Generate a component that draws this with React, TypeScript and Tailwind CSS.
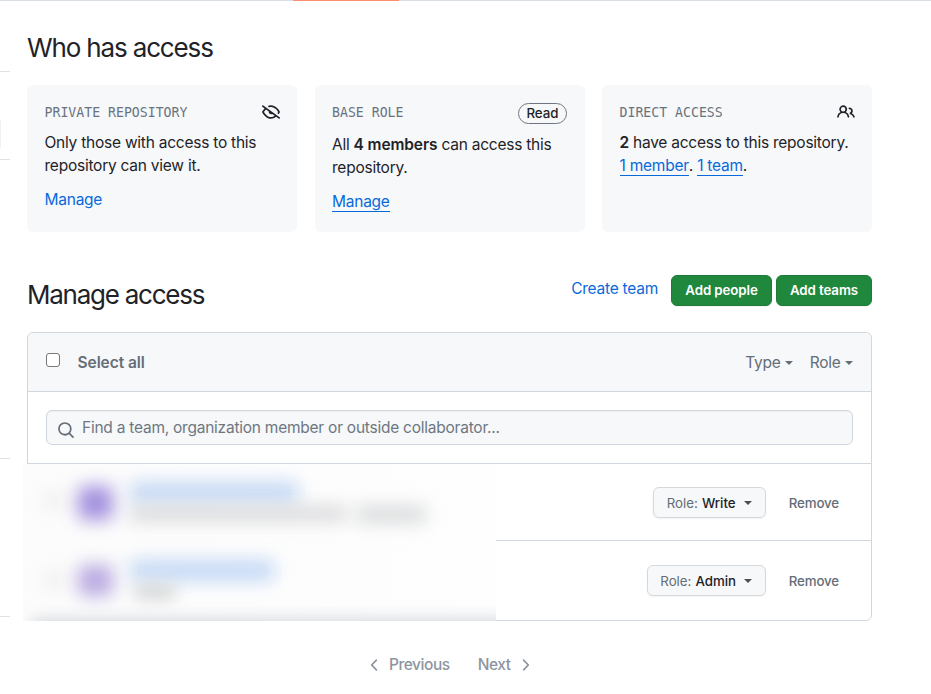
import React from 'react';

const paths = {
  eyeClosed:
    'M.143 2.31a.75.75 0 0 1 1.047-.167l14.5 10.5a.75.75 0 1 1-.88 1.214l-2.248-1.628C11.346 13.19 9.792 14 8 14c-1.981 0-3.67-.992-4.933-2.078C1.797 10.832.88 9.577.43 8.9a1.619 1.619 0 0 1 0-1.797c.353-.533.995-1.42 1.868-2.305L.31 3.357A.75.75 0 0 1 .143 2.31Zm1.536 5.622A.12.12 0 0 0 1.657 8c0 .021.006.045.022.068.412.621 1.242 1.75 2.366 2.717C5.175 11.758 6.527 12.5 8 12.5c1.195 0 2.31-.488 3.29-1.191L9.063 9.695A2 2 0 0 1 6.058 7.52L3.529 5.688a14.207 14.207 0 0 0-1.85 2.244ZM8 3.5c-.516 0-1.017.09-1.499.251a.75.75 0 1 1-.473-1.423A6.207 6.207 0 0 1 8 2c1.981 0 3.67.992 4.933 2.078 1.27 1.091 2.187 2.345 2.637 3.023a1.62 1.62 0 0 1 0 1.798c-.11.166-.248.365-.41.587a.75.75 0 1 1-1.21-.887c.148-.201.272-.382.371-.53a.119.119 0 0 0 0-.137c-.412-.621-1.242-1.75-2.366-2.717C10.825 4.242 9.473 3.5 8 3.5Z',
  people:
    'M2 5.5a3.5 3.5 0 1 1 5.898 2.549 5.508 5.508 0 0 1 3.034 4.084.75.75 0 1 1-1.482.235 4 4 0 0 0-7.9 0 .75.75 0 0 1-1.482-.236A5.507 5.507 0 0 1 3.102 8.05 3.493 3.493 0 0 1 2 5.5ZM11 4a3.001 3.001 0 0 1 2.22 5.018 5.01 5.01 0 0 1 2.56 3.012.749.749 0 0 1-.885.954.752.752 0 0 1-.549-.514 3.507 3.507 0 0 0-2.522-2.372.75.75 0 0 1-.574-.73v-.352a.75.75 0 0 1 .416-.672A1.5 1.5 0 0 0 11 5.5.75.75 0 0 1 11 4Zm-5.5-.5a2 2 0 1 0-.001 3.999A2 2 0 0 0 5.5 3.5Z',
  search:
    'M10.68 11.74a6 6 0 0 1-7.922-8.982 6 6 0 0 1 8.982 7.922l3.04 3.04a.749.749 0 0 1-.326 1.275.749.749 0 0 1-.734-.215ZM11.5 7a4.499 4.499 0 1 0-8.997 0A4.499 4.499 0 0 0 11.5 7Z',
  chevronLeft:
    'M9.78 12.78a.75.75 0 0 1-1.06 0L4.47 8.53a.75.75 0 0 1 0-1.06l4.25-4.25a.751.751 0 0 1 1.042.018.751.751 0 0 1 .018 1.042L6.06 8l3.72 3.72a.75.75 0 0 1 0 1.06Z',
  chevronRight:
    'M6.22 3.22a.75.75 0 0 1 1.06 0l4.25 4.25a.75.75 0 0 1 0 1.06l-4.25 4.25a.751.751 0 0 1-1.042-.018.751.751 0 0 1-.018-1.042L9.94 8 6.22 4.28a.75.75 0 0 1 0-1.06Z',
};

const Icon: React.FC<{ name: keyof typeof paths; className?: string }> = ({ name, className }) => (
  <svg viewBox="0 0 16 16" fill="currentColor" className={`h-[18px] w-[18px] shrink-0 ${className ?? ''}`}>
    <path d={paths[name]} />
  </svg>
);

const Caret: React.FC<{ className?: string }> = ({ className }) => (
  <span className={`inline-block border-x-[4.5px] border-t-[4.5px] border-x-transparent border-t-current ${className ?? ''}`} />
);

interface CardProps {
  label: string;
  extra: React.ReactNode;
  children: React.ReactNode;
}

const Card: React.FC<CardProps> = ({ label, extra, children }) => (
  <div className="h-[147px] w-[270px] rounded-md bg-[#f6f8fa] px-[17.5px] pt-[18px]">
    <div className="flex items-start justify-between">
      <span className="font-['DejaVu_Sans_Mono',monospace] text-[13.2px] leading-[19px] tracking-normal text-[#6a737d]">
        {label}
      </span>
      {extra}
    </div>
    {children}
  </div>
);

const members = [
  { role: 'Write', row: 'h-[77px] border-b border-[#d0d7de]', button: 'w-[113px]', pad: 'pt-[2px]' },
  { role: 'Admin', row: 'h-[79px]', button: 'w-[119px]', pad: 'pt-px' },
];

const App: React.FC = () => (
  <div className="h-[694px] w-[931px] overflow-hidden bg-white font-['Inter',sans-serif] text-[15.5px] leading-[23px] tracking-[-0.24px] text-[#1f2328]">
    {/* Tab underline */}
    <div className="flex h-px bg-[#d8dee4]">
      <div className="ml-[293px] w-[106px] bg-[#fd8c73]" />
    </div>

    <div className="flex">
      {/* Edge of the settings navigation */}
      <div className="flex w-[27px] flex-col">
        <div className="mt-[70px] h-px w-[10px] bg-[#dfe3e8]" />
        <div className="mt-[48px] h-[28px] w-px bg-[#eff1f3]" />
        <div className="mt-[11px] h-px w-[10px] bg-[#dfe3e8]" />
        <div className="mt-[298px] h-px w-[10px] bg-[#dfe3e8]" />
        <div className="mt-[157px] h-px w-[10px] bg-[#dfe3e8]" />
      </div>

      <main className="w-[845px]">
        <h1 className="mt-[29px] text-[26px] leading-[36px] tracking-[-1.15px]">Who has access</h1>

        <div className="mt-[19px] flex justify-between">
          <Card label="PRIVATE REPOSITORY" extra={<Icon name="eyeClosed" />}>
            <p className="mt-[9px] whitespace-nowrap">
              Only those with access to this
              <br />
              repository can view it.
            </p>
            <a className="mt-[11px] block text-[#0969da]">Manage</a>
          </Card>
          <Card
            label="BASE ROLE"
            extra={
              <span className="flex h-[21px] w-[49px] items-center justify-center rounded-full border border-[#6e7781] text-[13.3px] font-medium tracking-normal">
                Read
              </span>
            }
          >
            <p className="mt-[9px] whitespace-nowrap">
              All <b className="font-semibold tracking-[-0.12px]">4 members</b> can access this
              <br />
              repository.
            </p>
            <div className="mt-[13px] leading-[19px]">
              <a className="inline-block border-b border-[#0969da] text-[#0969da]">Manage</a>
            </div>
          </Card>
          <Card label="DIRECT ACCESS" extra={<Icon name="people" />}>
            <p className="mt-[9px] whitespace-nowrap">
              <b className="font-semibold">2</b> have access to this repository.
            </p>
            <p className="mt-[2px] flex whitespace-pre leading-[19px]">
              <a className="border-b border-[#0969da] text-[#0969da]">1 member</a>
              <span>. </span>
              <a className="border-b border-[#0969da] text-[#0969da]">1 team</a>
              <span>.</span>
            </p>
          </Card>
        </div>

        <div className="mt-[43px] flex h-[40px] items-start">
          <h2 className="mt-[2px] text-[26px] leading-[36px] tracking-[-1.25px]">Manage access</h2>
          <a className="mr-[13px] ml-auto mt-[2px] text-[#0969da]">Create team</a>
          <button className="mr-1 h-[31px] w-[101px] rounded-md border border-[#1f7a37] bg-[#1f883d] text-[13.3px] font-semibold tracking-[-0.1px] text-white shadow-xs">
            Add people
          </button>
          <button className="h-[31px] w-[96px] rounded-md border border-[#1f7a37] bg-[#1f883d] text-[13.3px] font-semibold tracking-[-0.1px] text-white shadow-xs">
            Add teams
          </button>
        </div>

        <section className="relative mt-[17px] h-[289px] rounded-md border border-[#d0d7de]">
          <div className="flex h-[59px] items-center rounded-t-md border-b border-[#d0d7de] bg-[#f6f8fa] pt-px pr-[18.5px] pl-[17.5px] text-[#656d76]">
            <span className="mb-[6px] h-[14px] w-[14px] rounded-[3px] border border-[#767676] bg-white" />
            <span className="ml-[18px] font-semibold tracking-[-0.06px]">Select all</span>
            <span className="ml-auto flex items-center">
              Type
              <Caret className="ml-1" />
            </span>
            <span className="ml-[17px] flex items-center">
              Role
              <Caret className="ml-1" />
            </span>
          </div>

          <div className="h-[72px] border-b border-[#d0d7de] px-[18px] pt-[18px]">
            <div className="flex h-[35px] items-center rounded-md border border-[#d0d7de] bg-[#f6f8fa] pl-[10px] text-[#6e7781] shadow-[inset_0_1px_0_rgba(208,215,222,0.2)]">
              <Icon name="search" className="mt-[5px] text-[#656d76]" />
              <span className="ml-[7px]">Find a team, organization member or outside collaborator...</span>
            </div>
          </div>

          {members.map(({ role, row, button, pad }) => (
            <div key={role} className={`flex items-center justify-end pr-8 text-[13.3px] tracking-[-0.12px] ${row}`}>
              <button
                className={`flex h-[31px] items-center justify-center rounded-md border border-[#d5d8da] bg-[#f6f8fa] font-medium tracking-normal shadow-xs ${button} ${pad}`}
              >
                <span className="mr-1 font-normal text-[#656d76]">Role:</span>
                {role}
                <Caret className="ml-2 text-[#4a4f55]" />
              </button>
              <span className={`ml-[23px] font-medium text-[#656d76] ${pad}`}>Remove</span>
            </div>
          ))}

          {/* Redacted member details */}
          <div className="absolute top-[131px] -left-[5px] h-[157px] w-[473px] overflow-hidden bg-linear-to-r from-[#fcfcfc] to-[#fefefe]">
            <div className="absolute top-[30px] left-[21px] h-[14px] w-[20px] bg-[#ececec] blur-[9px]" />
            <div className="absolute top-[22px] left-[55px] h-[34px] w-[35px] rounded-md bg-[#a390de] blur-[9px]" />
            <div className="absolute top-[18px] left-[107px] h-[21px] w-[168px] bg-[#c3d8f5] blur-[9px]" />
            <div className="absolute top-[42px] left-[107px] h-[15px] w-[216px] bg-[#d6d7d9] blur-[9px]" />
            <div className="absolute top-[42px] left-[333px] h-[17px] w-[70px] bg-[#d8dadb] blur-[9px]" />
            <div className="absolute top-[109px] left-[21px] h-[14px] w-[20px] bg-[#ececec] blur-[9px]" />
            <div className="absolute top-[101px] left-[55px] h-[31px] w-[35px] rounded-md bg-[#baaae1] blur-[9px]" />
            <div className="absolute top-[96px] left-[107px] h-[21px] w-[144px] bg-[#c3d8f5] blur-[9px]" />
            <div className="absolute top-[121px] left-[112px] h-[14px] w-[40px] bg-[#d2d4d4] blur-[8px]" />
            <div className="absolute top-[155px] left-[9px] h-[20px] w-[500px] bg-[#d3d6dc] blur-[8px]" />
          </div>
        </section>

        <nav className="mt-[32px] flex items-center pl-[339px] font-medium tracking-[-0.45px] text-[#8c959f]">
          <Icon name="chevronLeft" />
          <span className="ml-[5px]">Previous</span>
          <span className="ml-[28px]">Next</span>
          <Icon name="chevronRight" className="ml-[5px]" />
        </nav>
      </main>
    </div>
  </div>
);

export default App;
